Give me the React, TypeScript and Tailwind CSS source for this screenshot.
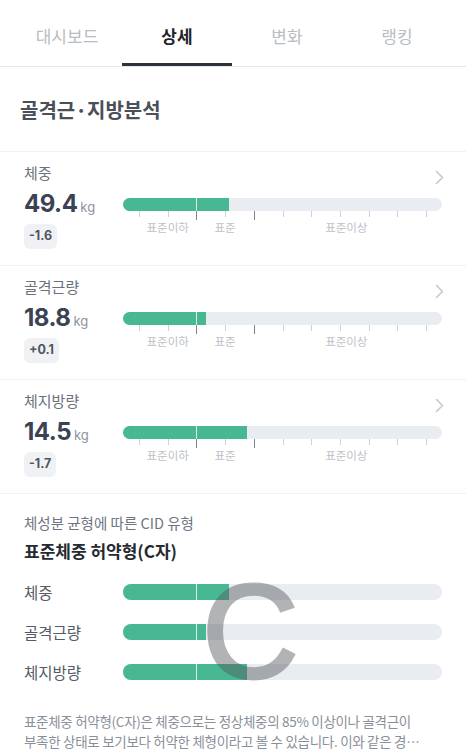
import React from "react";

const KR = { fontFamily: '"Noto Sans CJK KR", "Noto Sans", sans-serif' };
const NUM = { fontFamily: 'Inter, "Noto Sans CJK KR", sans-serif' };

const TICKS = [5, 14, 23, 32, 41, 50, 59, 68, 77, 86, 95];

function Bar({ fill, h = "h-[13px]" }: { fill: number; h?: string }) {
  return (
    <div className={`relative w-full ${h} rounded-full bg-[#e9ecf0] overflow-hidden`}>
      <div className="absolute left-0 top-0 bottom-0 bg-[#47b893]" style={{ width: `${fill}%` }} />
      <div className="absolute top-0 bottom-0 left-[23%] w-px bg-white/80" />
    </div>
  );
}

function MetricRow({
  label,
  value,
  diff,
  fill,
}: {
  label: string;
  value: string;
  diff: string;
  fill: number;
}) {
  return (
    <div className="relative border-b border-[#f1f2f4] pl-6 pr-6 pt-[11px] pb-[16px]">
      <div className="text-[15px] leading-[20px] text-[#6b717b]">{label}</div>
      <svg className="absolute right-[22px] top-[18px]" width="9" height="15" viewBox="0 0 9 15">
        <path d="M1.5 1.5 L7.5 7.5 L1.5 13.5" fill="none" stroke="#c6cad0" strokeWidth="1.6" strokeLinecap="round" strokeLinejoin="round" />
      </svg>
      <div className="flex">
        <div className="w-[99px] shrink-0">
          <div className="flex items-baseline h-[32px] pt-[6px]">
            <span style={NUM} className="text-[24px] font-bold leading-[30px] text-[#3b4353] tracking-[-0.5px]">{value}</span>
            <span style={NUM} className="ml-[3px] text-[13px] text-[#8c939d]">kg</span>
          </div>
          <div className="mt-[9px] inline-flex h-[25px] items-center rounded-md bg-[#eff1f4] px-[5px]">
            <span style={NUM} className="text-[12.5px] font-bold text-[#4d5563]">{diff}</span>
          </div>
        </div>
        <div className="flex-1 pt-[15px]">
          <Bar fill={fill} />
          <div className="relative h-[26px]">
            {TICKS.map((t) => {
              const major = t === 23 || t === 41;
              return (
                <div
                  key={t}
                  className={`absolute top-0 w-px ${major ? "h-[9px] bg-[#7e848d]" : "h-[6px] bg-[#cdd1d6]"}`}
                  style={{ left: `${t}%` }}
                />
              );
            })}
            <span className="absolute top-[8px] left-[14%] -translate-x-1/2 text-[11.5px] leading-[16px] text-[#bdc1c7] whitespace-nowrap">표준이하</span>
            <span className="absolute top-[8px] left-[32%] -translate-x-1/2 text-[11.5px] leading-[16px] text-[#bdc1c7] whitespace-nowrap">표준</span>
            <span className="absolute top-[8px] left-[70%] -translate-x-1/2 text-[11.5px] leading-[16px] text-[#bdc1c7] whitespace-nowrap">표준이상</span>
          </div>
        </div>
      </div>
    </div>
  );
}

export default function App() {
  const tabs = ["대시보드", "상세", "변화", "랭킹"];
  return (
    <div style={KR} className="w-[466px] h-[752px] overflow-hidden bg-white">
      <div className="flex border-b border-[#e6e8ec] px-3">
        {tabs.map((t, i) => (
          <div key={t} className="relative flex h-[66px] w-[110px] items-start justify-center pt-[23px]">
            <span className={`text-[17px] leading-[26px] ${i === 1 ? "font-bold text-[#1f2329]" : "text-[#b9bdc4]"}`}>{t}</span>
            {i === 1 && <div className="absolute bottom-0 left-0 right-0 h-[3px] bg-[#2c333c]" />}
          </div>
        ))}
      </div>
      <div className="border-b border-[#f1f2f4] pl-5 pt-[29px] pb-[27px]">
        <h1 className="text-[20px] font-bold leading-[28px] text-[#4a4f58]">골격근·지방분석</h1>
      </div>
      <MetricRow label="체중" value="49.4" diff="-1.6" fill={33.2} />
      <MetricRow label="골격근량" value="18.8" diff="+0.1" fill={26} />
      <MetricRow label="체지방량" value="14.5" diff="-1.7" fill={38.9} />
      <div className="relative px-6 pt-[19px]">
        <div className="text-[14.5px] leading-[20px] text-[#6f7580]">체성분 균형에 따른 CID 유형</div>
        <div className="mt-[6px] text-[17px] font-bold leading-[24px] text-[#262a31]">표준체중 허약형(C자)</div>
        <div className="relative mt-[21px] flex flex-col gap-[24px]">
          {[
            ["체중", 33.2],
            ["골격근량", 26],
            ["체지방량", 38.9],
          ].map(([l, f]) => (
            <div key={l as string} className="flex items-center">
              <div className="w-[99px] shrink-0 text-[15.5px] leading-[16px] text-[#555b66]">{l}</div>
              <div className="flex-1">
                <Bar fill={f as number} h="h-[16px]" />
              </div>
            </div>
          ))}
          <span
            style={{ fontFamily: '"Liberation Sans", Arial, sans-serif' }}
            className="pointer-events-none absolute left-[178px] top-[-27px] text-[134px] font-normal leading-[150px] text-[#55585c] opacity-45 [-webkit-text-stroke:3px_#55585c]"
          >
            C
          </span>
        </div>
        <p className="mt-[31px] break-keep whitespace-nowrap overflow-hidden text-[13.5px] leading-[20px] text-[#8a9099] tracking-[-0.3px]">
          표준체중 허약형(C자)은 체중으로는 정상체중의 85% 이상이나 골격근이
          <br />
          부족한 상태로 보기보다 허약한 체형이라고 볼 수 있습니다. 이와 같은 경…
        </p>
      </div>
    </div>
  );
}
